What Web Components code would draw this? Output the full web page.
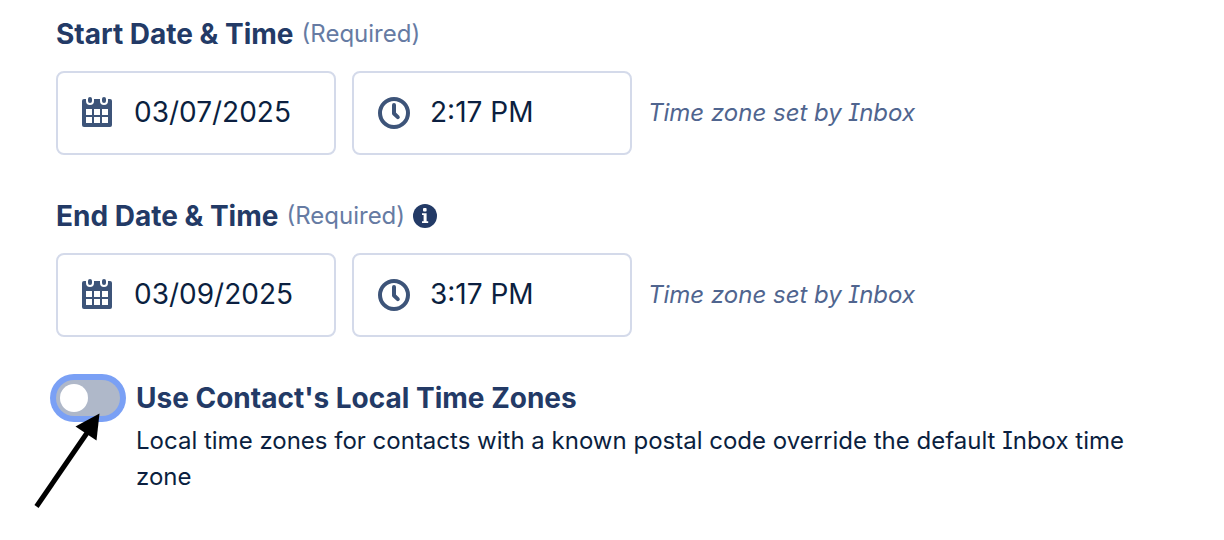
<!DOCTYPE html>
<html lang="en">
<head>
<meta charset="utf-8">
<meta name="viewport" content="width=device-width, initial-scale=1">
<title>Schedule</title>
<style>
  body {
    margin: 0;
    background: #fff;
    color: #0b1f40;
    font-family: Inter, sans-serif;
    font-size: 24px;
    line-height: 36px;
    --heading: #233a66;
    --muted: #667ba3;
    --note: #50658f;
    --icon: #3d5479;
    --border: #d4daea;
  }
</style>
</head>
<body>
<schedule-form></schedule-form>

<template id="schedule-form">
  <style>
    :host { display: block; }
    form { display: flex; flex-direction: column; gap: 43px; padding: 16px 56px; }
  </style>
  <form>
    <date-time-group date="03/07/2025" time="2:17 PM">
      <span slot="title">Start Date &amp; Time</span>
      <span slot="note">Time zone set by Inbox</span>
    </date-time-group>
    <date-time-group date="03/09/2025" time="3:17 PM">
      <span slot="title">End Date &amp; Time</span>
      <info-button slot="info"></info-button>
      <span slot="note">Time zone set by Inbox</span>
    </date-time-group>
    <toggle-option>
      <span slot="title">Use Contact's Local Time Zones</span>
      <span slot="description">Local time zones for contacts with a known postal code override the default Inbox time zone</span>
    </toggle-option>
  </form>
</template>

<template id="date-time-group">
  <style>
    :host { display: block; }
    fieldset { margin: 0; padding: 0; border: 0; min-width: 0; }
    legend { display: flex; align-items: center; gap: 8px; padding: 0; margin: 0 0 19px; }
    .title { color: var(--heading); font-size: 28px; font-weight: 700; }
    .required { color: var(--muted); }
    .row { display: flex; align-items: center; gap: 16px; }
    .note { color: var(--note); font-style: italic; font-feature-settings: "cv08"; }
  </style>
  <fieldset>
    <legend><span class="title"><slot name="title"></slot></span><span class="required">(Required)</span><slot name="info"></slot></legend>
    <div class="row">
      <icon-field class="date" icon="calendar" label="Date"></icon-field>
      <icon-field class="time" icon="clock" label="Time"></icon-field>
      <span class="note"><slot name="note"></slot></span>
    </div>
  </fieldset>
</template>

<template id="icon-field">
  <style>
    :host { display: block; flex: 0 1 280px; min-width: 0; }
    label { display: flex; align-items: center; gap: 20px; box-sizing: border-box; height: 84px; padding: 0 22px; border: 2px solid var(--border); border-radius: 8px; background: #fff; }
    .icon { display: contents; }
    svg { flex: none; width: 34px; height: 34px; color: var(--icon); }
    input { flex: 1; min-width: 0; width: 0; height: 36px; margin: 0; padding: 0 0 2px; box-sizing: border-box; border: 0; outline: 0; background: none; color: inherit; font: inherit; font-size: 28px; line-height: 34px; }
  </style>
  <label><span class="icon"></span><input type="text"></label>
</template>

<template id="info-button">
  <style>
    :host { display: block; }
    button { display: block; margin: 0; padding: 0; border: 0; background: none; color: var(--heading); }
    svg { display: block; width: 26px; height: 26px; }
  </style>
  <button type="button" aria-label="More information">
    <svg viewBox="1 0 26 26" aria-hidden="true"><circle cx="13" cy="13" r="12" fill="currentColor"/><rect x="11" y="5" width="3.600" height="3.600" rx="1" fill="#fff"/><path d="M10 10.300h4.600v7.900h1.600v1.800H10v-1.800h1.600v-6.100H10z" fill="#fff"/></svg>
  </button>
</template>

<template id="toggle-option">
  <style>
    :host { display: flex; align-items: flex-start; gap: 16px; }
    .switch { position: relative; flex: none; width: 64px; height: 36px; }
    input { appearance: none; display: block; box-sizing: border-box; width: 64px; height: 36px; margin: 0; padding: 4px; border-radius: 18px; background: #afb8c9; box-shadow: 0 0 0 6px #7aa0f5; outline: 0; }
    input::before { content: ""; display: block; width: 28px; height: 28px; border-radius: 50%; background: #fff; }
    input:checked { background: var(--heading); }
    input:checked::before { margin-left: auto; }
    .pointer { position: absolute; left: -24px; top: 32px; width: 72px; height: 100px; pointer-events: none; }
    .text { flex: 1; min-width: 0; }
    label { display: block; color: var(--heading); font-size: 28px; font-weight: 700; font-variation-settings: "opsz" 32; }
    p { margin: 7px 0 0; font-feature-settings: "cv08"; }
  </style>
  <div class="switch">
    <input type="checkbox" role="switch" id="toggle" aria-describedby="description">
    <svg class="pointer" viewBox="0 0 72 100" aria-hidden="true"><path d="M4.500 94.500 57 18" stroke="#000" stroke-width="5" fill="none"/><path d="M67.500 1.500 64.500 28.500 43.500 14.500z"/></svg>
  </div>
  <div class="text">
    <label for="toggle"><slot name="title"></slot></label>
    <p id="description"><slot name="description"></slot></p>
  </div>
</template>

<script>
  const icons = {
    calendar: `<svg viewBox="0 1 34 34" aria-hidden="true">
      <path fill="currentColor" d="M4 4h26a2 2 0 0 1 2 2v24a2 2 0 0 1-2 2H4a2 2 0 0 1-2-2V6a2 2 0 0 1 2-2z"/>
      <path fill="#fff" d="M6 14h6v6H6zm8 0h6v6h-6zm8 0h6v6h-6zM6 22h6v6H6zm8 0h6v6h-6zm8 0h6v6h-6zM6 2h8v4a4 4 0 0 1-8 0zm14 0h8v4a4 4 0 0 1-8 0z"/>
      <rect x="8" y="2" width="4" height="6" rx="2" fill="currentColor"/><rect x="22" y="2" width="4" height="6" rx="2" fill="currentColor"/></svg>`,
    clock: `<svg viewBox="0 0 34 34" aria-hidden="true" fill="none" stroke="currentColor">
      <circle cx="18" cy="17" r="14" stroke-width="4"/><path d="M18 9v8.500l3.800 3.600" stroke-width="4" stroke-linecap="round" stroke-linejoin="round"/></svg>`
  };

  class Component extends HTMLElement {
    connectedCallback() {
      if (this.shadowRoot) return;
      const root = this.attachShadow({ mode: 'open' });
      root.append(document.getElementById(this.localName).content.cloneNode(true));
      this.ready(root);
    }
    ready() {}
  }

  customElements.define('icon-field', class extends Component {
    ready(root) {
      root.querySelector('.icon').innerHTML = icons[this.getAttribute('icon')];
      root.querySelector('input').setAttribute('aria-label', this.getAttribute('label'));
    }
  });
  customElements.define('info-button', class extends Component {});
  customElements.define('toggle-option', class extends Component {});
  customElements.define('date-time-group', class extends Component {
    ready(root) {
      for (const part of ['date', 'time']) {
        root.querySelector('.' + part).shadowRoot.querySelector('input').value = this.getAttribute(part);
      }
    }
  });
  customElements.define('schedule-form', class extends Component {});
</script>
</body>
</html>
